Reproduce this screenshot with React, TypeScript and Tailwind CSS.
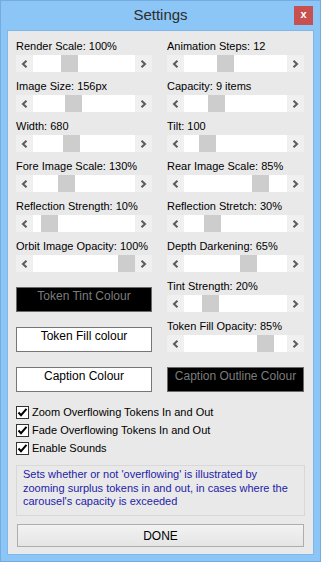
import React from "react";

type SliderItem = { label: string; thumb: number };

const leftSliders: SliderItem[] = [
  { label: "Render Scale: 100%", thumb: 28 },
  { label: "Image Size: 156px", thumb: 32 },
  { label: "Width: 680", thumb: 30 },
  { label: "Fore Image Scale: 130%", thumb: 25 },
  { label: "Reflection Strength: 10%", thumb: 8 },
  { label: "Orbit Image Opacity: 100%", thumb: 85 },
];

const rightSliders: SliderItem[] = [
  { label: "Animation Steps: 12", thumb: 33 },
  { label: "Capacity: 9 items", thumb: 24 },
  { label: "Tilt: 100", thumb: 15 },
  { label: "Rear Image Scale: 85%", thumb: 68 },
  { label: "Reflection Stretch: 30%", thumb: 20 },
  { label: "Depth Darkening: 65%", thumb: 56 },
  { label: "Tint Strength: 20%", thumb: 18 },
  { label: "Token Fill Opacity: 85%", thumb: 73 },
];

const checks = [
  "Zoom Overflowing Tokens In and Out",
  "Fade Overflowing Tokens In and Out",
  "Enable Sounds",
];

const Chevron: React.FC<{ dir: "left" | "right" }> = ({ dir }) => (
  <svg width="7" height="8" viewBox="0 0 7 8">
    <path
      d={dir === "left" ? "M5.5 0.8 L2 4 L5.5 7.2" : "M1.5 0.8 L5 4 L1.5 7.2"}
      fill="none"
      stroke="#5a5a5a"
      strokeWidth="2"
    />
  </svg>
);

const SliderRow: React.FC<{ item: SliderItem }> = ({ item }) => (
  <div className="flex flex-col">
    <div className="h-[13px] leading-[13px] mb-[2px] whitespace-nowrap">{item.label}</div>
    <div className="flex h-[17px]">
      <div className="w-[17px] bg-[#f0f0f0] flex items-center justify-center">
        <Chevron dir="left" />
      </div>
      <div className="flex-1 bg-white flex">
        <div
          className="w-[17px] h-full bg-[#cdcdcd]"
          style={{ marginLeft: item.thumb }}
        ></div>
      </div>
      <div className="w-[17px] bg-[#f0f0f0] flex items-center justify-center">
        <Chevron dir="right" />
      </div>
    </div>
  </div>
);

const ColourBox: React.FC<{ label: string; dark?: boolean }> = ({ label, dark }) => (
  <div
    className={`h-[25px] border text-[12px] leading-[15px] text-center pt-[1px] whitespace-nowrap ${
      dark
        ? "bg-black border-[#6a6a6a] text-[#7c7c7c]"
        : "bg-white border-[#767676] text-black"
    }`}
  >
    {label}
  </div>
);

export default function App() {
  return (
    <div className="w-[321px] h-[562px] bg-[#8bc6f7] border border-[#76abdf] flex flex-col font-['Liberation_Sans',Arial,sans-serif] text-[11px] text-black">
      <div className="h-[29px] grid grid-cols-[1fr_auto_1fr] items-start">
        <div></div>
        <div className="pt-[4px] text-[15px] leading-[20px] text-[#2d2d2d]">Settings</div>
        <div className="flex justify-end pr-[7px] pt-[5px]">
          <div className="w-[19px] h-[19px] bg-[#c75050] flex items-center justify-center text-white text-[11px] font-bold leading-none pb-[2px]">
            x
          </div>
        </div>
      </div>
      <div className="flex-1 mx-[6px] mb-[6px] bg-[#e9e9e9] border border-[#80b6ea] flex flex-col pl-[8px] pt-[9px]">
        <div className="flex gap-[15px]">
          <div className="w-[136px] flex flex-col">
            <div className="flex flex-col gap-[8px]">
              {leftSliders.map((s) => (
                <SliderRow key={s.label} item={s} />
              ))}
            </div>
            <div className="flex flex-col gap-[15px] mt-[15px]">
              <ColourBox label="Token Tint Colour" dark />
              <ColourBox label="Token Fill colour" />
              <ColourBox label="Caption Colour" />
            </div>
          </div>
          <div className="w-[137px] flex flex-col">
            <div className="flex flex-col gap-[8px]">
              {rightSliders.map((s) => (
                <SliderRow key={s.label} item={s} />
              ))}
            </div>
            <div className="flex flex-col mt-[15px]">
              <ColourBox label="Caption Outline Colour" dark />
            </div>
          </div>
        </div>
        <div className="flex flex-col mt-[11px] text-[11px]">
          {checks.map((c) => (
            <div key={c} className="h-[18px] flex items-center gap-[3px]">
              <div className="w-[13px] h-[13px] bg-white border border-[#333333] flex items-center justify-center">
                <svg width="11" height="11" viewBox="0 0 11 11">
                  <path d="M1.5 5.5 L4 8.2 L9.5 1.8" fill="none" stroke="#000" strokeWidth="2" />
                </svg>
              </div>
              <span className="whitespace-nowrap">{c}</span>
            </div>
          ))}
        </div>
        <div className="mt-[8px] w-[289px] h-[51px] border border-[#d8d8d8] px-[6px] pt-[2px] text-[#1e22a8] leading-[13.5px]">
          Sets whether or not 'overflowing' is illustrated by zooming surplus tokens in and out, in cases where the carousel's capacity is exceeded
        </div>
        <div className="mt-[8px] ml-[1px] w-[287px] h-[23px] border border-[#adadad] bg-gradient-to-b from-[#f2f2f2] to-[#e5e5e5] flex items-center justify-center text-[12px]">
          DONE
        </div>
      </div>
    </div>
  );
}
